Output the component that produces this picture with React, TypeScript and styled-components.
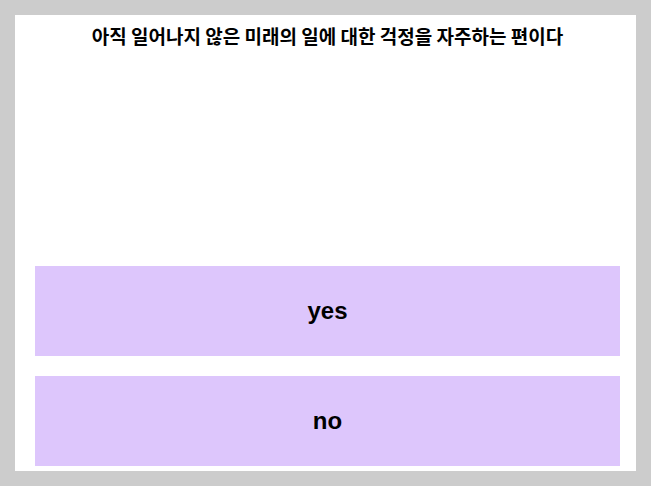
import React from 'react'
import styled, { createGlobalStyle } from 'styled-components'

const GlobalStyle = createGlobalStyle`
  html, body {
    margin: 0;
    padding: 0;
    background: #cccccc;
  }
  body {
    font-family: "Liberation Sans", Arial, sans-serif;
  }
`

const answers = ['yes', 'no']

const App = () => {
  return (
    <>
      <GlobalStyle />
      <Page>
        <Card>
          <Question>아직 일어나지 않은 미래의 일에 대한 걱정을 자주하는 편이다</Question>
          <Answers>
            {answers.map((a) => (
              <AnswerButton key={a}>{a}</AnswerButton>
            ))}
          </Answers>
        </Card>
      </Page>
    </>
  )
}
export default App

const Page = styled.div`
  box-sizing: border-box;
  height: 100vh;
  padding: 15px;
  display: flex;
`

const Card = styled.div`
  flex: 1;
  background: #ffffff;
  display: flex;
  flex-direction: column;
  justify-content: space-between;
  padding: 0 16px 5px 20px;
`

const Question = styled.h1`
  margin: 9px 0 0;
  text-align: center;
  font-family: "Noto Sans CJK KR", sans-serif;
  font-weight: 700;
  font-size: 19px;
  line-height: 24px;
  color: #000;
`

const Answers = styled.div`
  display: flex;
  flex-direction: column;
  gap: 20px;
`

const AnswerButton = styled.button`
  height: 90px;
  border: none;
  background: #ddc6fc;
  font-family: "Liberation Sans", Arial, sans-serif;
  font-weight: 700;
  font-size: 24px;
  color: #000;
  cursor: pointer;
`
